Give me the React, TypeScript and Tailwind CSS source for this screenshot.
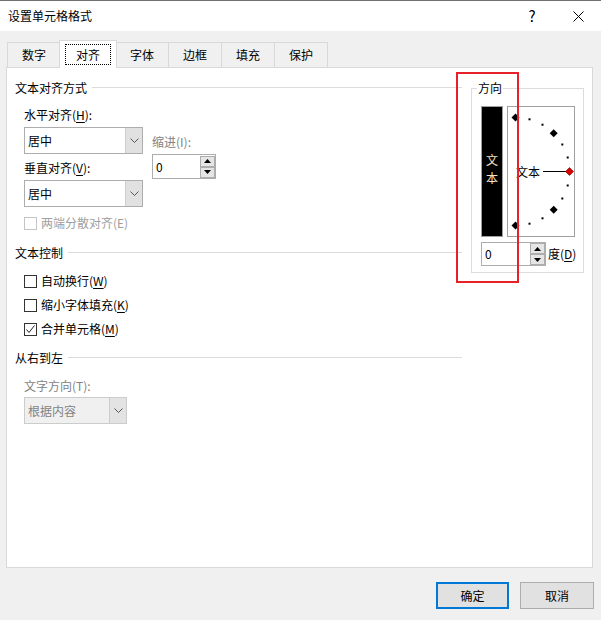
import React from "react";

function Acc({ children }: { children: React.ReactNode }) {
  return <span className="underline underline-offset-2">{children}</span>;
}

function Section({ title, className = "" }: { title: string; className?: string }) {
  return (
    <div className={`flex items-center h-4 ${className}`}>
      <span className="leading-4">{title}</span>
      <div className="flex-1 h-px bg-[#dcdcdc] ml-[5px] -mt-px" />
    </div>
  );
}

function Chevron() {
  return (
    <svg width="9" height="5" viewBox="0 0 9 5">
      <polyline points="0.5,0.5 4.5,4.5 8.5,0.5" fill="none" stroke="#555" strokeWidth="1" />
    </svg>
  );
}

function Select({ value, className = "", disabled }: { value: string; className?: string; disabled?: boolean }) {
  return (
    <div
      className={`flex h-[27px] border ${
        disabled ? "border-[#cccccc] bg-[#f0f0f0] text-[#838383]" : "border-[#adadad] bg-white"
      } ${className}`}
    >
      <span className="flex-1 pl-[3px] flex items-center leading-4">{value}</span>
      <div
        className={`w-[17px] flex items-center justify-center border-l ${
          disabled ? "border-[#cccccc] bg-[#e3e3e3]" : "border-[#cfcfcf] bg-[#e1e1e1]"
        }`}
      >
        <Chevron />
      </div>
    </div>
  );
}

function SpinBtn({ up }: { up?: boolean }) {
  return (
    <div className="w-[15px] h-[11px] border border-[#adadad] bg-[#e5e5e5] flex items-center justify-center">
      <svg width="7" height="4" viewBox="0 0 7 4">
        <polygon points={up ? "3.5,0 7,4 0,4" : "0,0 7,0 3.5,4"} fill="#000" />
      </svg>
    </div>
  );
}

function Spinner({ className = "" }: { className?: string }) {
  return (
    <div className={`flex items-center border border-[#adadad] bg-white ${className}`}>
      <span className="flex-1 pl-[3px] leading-4">0</span>
      <div className="flex flex-col">
        <SpinBtn up />
        <SpinBtn />
      </div>
    </div>
  );
}

function Check({ label, checked, disabled }: { label: React.ReactNode; checked?: boolean; disabled?: boolean }) {
  return (
    <div className="flex items-center h-4 gap-[4px]">
      <div
        className={`w-[13px] h-[13px] border bg-white flex items-center justify-center ${
          disabled ? "border-[#c4c4c4]" : "border-[#333333]"
        }`}
      >
        {checked && (
          <svg width="11" height="11" viewBox="0 0 11 11">
            <polyline points="1.5,5.5 4,8.5 9.5,1.5" fill="none" stroke="#222" strokeWidth="1" />
          </svg>
        )}
      </div>
      <span className={`leading-4 ${disabled ? "text-[#a0a0a0]" : ""}`}>{label}</span>
    </div>
  );
}

const diamonds = [
  [7.5, 10.5],
  [45.7, 26.3],
  [45.7, 102.7],
  [7.5, 118.5],
];
const dots = [
  [21.5, 12.3],
  [34.5, 17.7],
  [54.3, 37.5],
  [59.7, 50.5],
  [59.7, 78.5],
  [54.3, 91.5],
  [34.5, 111.3],
  [21.5, 116.7],
];

function Dial() {
  return (
    <div className="relative w-[68px] h-[131px] border border-[#a0a0a0] bg-white">
      <svg className="absolute inset-0" width="66" height="129" viewBox="0 0 66 129">
        {diamonds.map(([x, y], i) => (
          <polygon key={i} points={`${x},${y - 4} ${x + 4},${y} ${x},${y + 4} ${x - 4},${y}`} fill="#000" />
        ))}
        {dots.map(([x, y], i) => (
          <rect key={i} x={x - 1} y={y - 1} width="2" height="2" fill="#000" />
        ))}
        <line x1="35" y1="64.5" x2="58" y2="64.5" stroke="#000" strokeWidth="1" />
        <polygon points="61.5,60.5 65.5,64.5 61.5,68.5 57.5,64.5" fill="#e00000" stroke="#600" strokeWidth="0.6" />
      </svg>
      <span className="absolute left-[8px] top-[57px] leading-4">文本</span>
    </div>
  );
}

export default function App() {
  const tabs = ["数字", "对齐", "字体", "边框", "填充", "保护"];
  return (
    <div className="relative w-[601px] h-[620px] bg-[#f0f0f0] text-[12px] text-black font-['Microsoft_YaHei','Noto_Sans_CJK_SC',sans-serif] overflow-hidden">
      {/* title bar */}
      <div className="h-[31px] bg-white border-t border-[#707070] flex items-center">
        <span className="pl-[8px] leading-4 flex-1">设置单元格格式</span>
        <div className="w-[46px] h-full flex items-center justify-center text-[15px]">?</div>
        <div className="w-[46px] h-full flex items-center justify-center">
          <svg width="11" height="11" viewBox="0 0 11 11">
            <path d="M0.5 0.5 L10.5 10.5 M10.5 0.5 L0.5 10.5" stroke="#000" strokeWidth="1" />
          </svg>
        </div>
      </div>

      {/* tabs */}
      <div className="mt-[9px] pl-[7px] flex items-end relative z-10">
        {tabs.map((t, i) =>
          i === 1 ? (
            <div
              key={t}
              className="relative z-10 w-[58px] h-[28px] -mb-px -mx-[2px] bg-white border-t border-l border-r border-[#d9d9d9] flex items-center justify-center"
            >
              <span className="h-[21px] px-[10px] flex items-center border border-dotted border-black leading-4">{t}</span>
            </div>
          ) : (
            <div
              key={t}
              className={`w-[54px] h-[25px] bg-[#f0f0f0] border-t border-l border-r border-[#d9d9d9] flex items-center justify-center leading-4 ${
                i > 2 ? "-ml-px" : ""
              }`}
            >
              {t}
            </div>
          )
        )}
      </div>

      {/* panel */}
      <div className="ml-[6px] w-[587px] h-[501px] bg-white border border-[#d9d9d9] flex">
        <div className="ml-[8px] w-[447px] pt-[12px]">
          <Section title="文本对齐方式" />
          <div className="mt-[11px] pl-[9px] flex">
            <div className="w-[119px]">
              <div className="h-4 leading-4">
                水平对齐(<Acc>H</Acc>):
              </div>
              <Select value="居中" className="mt-[4px] w-[119px]" />
              <div className="h-4 leading-4 mt-[6px]">
                垂直对齐(<Acc>V</Acc>):
              </div>
              <Select value="居中" className="mt-[4px] w-[119px]" />
            </div>
            <div className="ml-[9px] pt-[27px]">
              <div className="h-4 leading-4 text-[#838383]">缩进(I):</div>
              <Spinner className="mt-[4px] w-[64px] h-[25px]" />
            </div>
          </div>
          <div className="mt-[8px] pl-[9px]">
            <Check label="两端分散对齐(E)" disabled />
          </div>

          <Section title="文本控制" className="mt-[14px]" />
          <div className="pl-[9px]">
            <div className="mt-[12px]">
              <Check label={<>自动换行(<Acc>W</Acc>)</>} />
            </div>
            <div className="mt-[8px]">
              <Check label={<>缩小字体填充(<Acc>K</Acc>)</>} />
            </div>
            <div className="mt-[8px]">
              <Check label={<>合并单元格(<Acc>M</Acc>)</>} checked />
            </div>
          </div>

          <Section title="从右到左" className="mt-[13px]" />
          <div className="pl-[9px]">
            <div className="mt-[12px] h-4 leading-4 text-[#838383]">文字方向(T):</div>
            <Select value="根据内容" className="mt-[3px] w-[103px]" disabled />
          </div>
        </div>

        {/* orientation group */}
        <div className="relative ml-[9px] mt-[20px] w-[113px] h-[185px] border border-[#dcdcdc] pl-[9px] pt-[17px]">
          <span className="absolute left-[5px] -top-[9px] px-px bg-white leading-4">方向</span>
          <div className="flex gap-[4px]">
            <div className="w-[22px] h-[131px] border border-[#a0a0a0] bg-black flex flex-col items-center justify-center pb-[5px] text-[#fbe3c0] leading-[18px]">
              <span>文</span>
              <span>本</span>
            </div>
            <Dial />
          </div>
          <div className="mt-[5px] flex items-center">
            <Spinner className="w-[65px] h-[24px]" />
            <span className="ml-[2px] leading-4">
              度(<Acc>D</Acc>)
            </span>
          </div>
        </div>
      </div>

      {/* buttons */}
      <div className="mt-[14px] pr-[7px] flex justify-end gap-[11px]">
        <button className="w-[73px] h-[27px] border-2 border-[#0078d7] bg-[#e1e1e1] leading-4">确定</button>
        <button className="w-[74px] h-[27px] border border-[#adadad] bg-[#e1e1e1] leading-4">取消</button>
      </div>

      {/* annotation */}
      <div className="absolute left-[456px] top-[72px] w-[63px] h-[211px] border-2 border-[#e8202a] pointer-events-none" />
    </div>
  );
}
